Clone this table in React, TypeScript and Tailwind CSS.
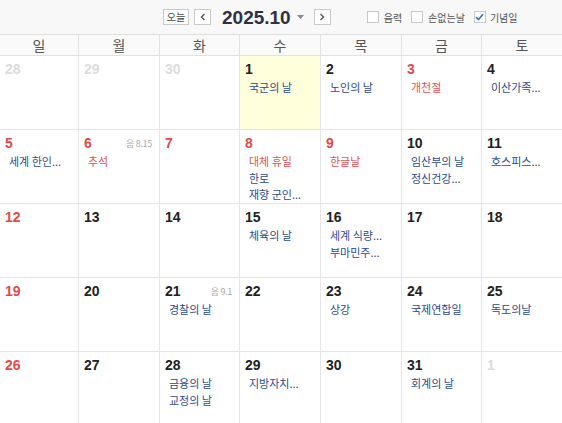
import React from "react";

type Ev = { t: string; red?: boolean };
type Day = { n: number; grey?: boolean; red?: boolean; today?: boolean; lunar?: string; ev?: Ev[] };

const weeks: Day[][] = [
  [
    { n: 28, grey: true },
    { n: 29, grey: true },
    { n: 30, grey: true },
    { n: 1, today: true, ev: [{ t: "국군의 날" }] },
    { n: 2, ev: [{ t: "노인의 날" }] },
    { n: 3, red: true, ev: [{ t: "개천절", red: true }] },
    { n: 4, ev: [{ t: "이산가족..." }] },
  ],
  [
    { n: 5, red: true, ev: [{ t: "세계 한인..." }] },
    { n: 6, red: true, lunar: "음 8.15", ev: [{ t: "추석", red: true }] },
    { n: 7, red: true },
    { n: 8, red: true, ev: [{ t: "대체 휴일", red: true }, { t: "한로" }, { t: "재향 군인..." }] },
    { n: 9, red: true, ev: [{ t: "한글날", red: true }] },
    { n: 10, ev: [{ t: "임산부의 날" }, { t: "정신건강..." }] },
    { n: 11, ev: [{ t: "호스피스..." }] },
  ],
  [
    { n: 12, red: true },
    { n: 13 },
    { n: 14 },
    { n: 15, ev: [{ t: "체육의 날" }] },
    { n: 16, ev: [{ t: "세계 식량..." }, { t: "부마민주..." }] },
    { n: 17 },
    { n: 18 },
  ],
  [
    { n: 19, red: true },
    { n: 20 },
    { n: 21, lunar: "음 9.1", ev: [{ t: "경찰의 날" }] },
    { n: 22 },
    { n: 23, ev: [{ t: "상강" }] },
    { n: 24, ev: [{ t: "국제연합일" }] },
    { n: 25, ev: [{ t: "독도의날" }] },
  ],
  [
    { n: 26, red: true },
    { n: 27 },
    { n: 28, ev: [{ t: "금융의 날" }, { t: "교정의 날" }] },
    { n: 29, ev: [{ t: "지방자치..." }] },
    { n: 30 },
    { n: 31, ev: [{ t: "회계의 날" }] },
    { n: 1, grey: true },
  ],
];

const dayNames = ["일", "월", "화", "수", "목", "금", "토"];
const KR = "font-['Noto_Sans_CJK_KR','Noto_Sans',sans-serif]";
const NUM = "font-['Liberation_Sans',Arial,sans-serif]";
const gridCols = "grid grid-cols-[79px_81px_80px_81px_81px_80px_1fr]";

function Check({ checked }: { checked?: boolean }) {
  return (
    <span className="flex h-[12px] w-[12px] items-center justify-center border border-[#c8c8c8] bg-white">
      {checked && (
        <svg width="9" height="8" viewBox="0 0 9 8">
          <path d="M1 4.2 L3.4 6.5 L8 1.2" fill="none" stroke="#3a6fc4" strokeWidth="1.6" />
        </svg>
      )}
    </span>
  );
}

export default function App() {
  return (
    <div className={`w-[562px] h-[423px] overflow-hidden bg-white ${KR}`}>
      {/* toolbar */}
      <div className="flex h-[35px] items-center border-b border-[#dedede] bg-[#f8f8f8] pl-[163px]">
        <button className="flex h-[16px] w-[26px] items-center justify-center border border-[#c9c9c9] bg-white text-[10px] leading-none text-[#444]">
          오늘
        </button>
        <button className="ml-[5px] flex h-[16px] w-[17px] items-center justify-center border border-[#c9c9c9] bg-white">
          <svg width="6" height="8" viewBox="0 0 6 8">
            <path d="M4.5 1 L1.5 4 L4.5 7" fill="none" stroke="#555" strokeWidth="1.4" />
          </svg>
        </button>
        <span className={`ml-[11px] text-[19px] font-bold leading-none text-[#2f3040] ${NUM}`}>2025.10</span>
        <svg className="ml-[6px]" width="7" height="4" viewBox="0 0 7 4">
          <path d="M0 0 L7 0 L3.5 4 Z" fill="#888" />
        </svg>
        <button className="ml-[10px] flex h-[16px] w-[17px] items-center justify-center border border-[#c9c9c9] bg-white">
          <svg width="6" height="8" viewBox="0 0 6 8">
            <path d="M1.5 1 L4.5 4 L1.5 7" fill="none" stroke="#555" strokeWidth="1.4" />
          </svg>
        </button>
        <div className="ml-[36px] flex items-center text-[10px] text-[#555]">
          <Check />
          <span className="ml-[5px]">음력</span>
          <span className="ml-[9px]"><Check /></span>
          <span className="ml-[5px]">손없는날</span>
          <span className="ml-[9px]"><Check checked /></span>
          <span className="ml-[4px]">기념일</span>
        </div>
      </div>
      {/* day header */}
      <div className={`${gridCols} h-[21px] border-b border-[#e2e2e2] bg-[#fafafa]`}>
        {dayNames.map((d, i) => (
          <div
            key={d}
            className={`flex items-center justify-center text-[14px] leading-none text-[#555] ${i < 6 ? "border-r border-[#e2e2e2]" : ""}`}
          >
            {d}
          </div>
        ))}
      </div>
      {/* weeks */}
      {weeks.map((w, wi) => (
        <div key={wi} className={`${gridCols} h-[74px] border-b border-[#e6e6e6]`}>
          {w.map((d, i) => (
            <div
              key={i}
              className={`pl-[5px] pr-[7px] pt-[5px] ${i < 6 ? "border-r border-[#e6e6e6]" : ""} ${d.today ? "bg-[#ffffdc]" : ""}`}
            >
              <div className="flex h-[16px] items-center justify-between">
                <span
                  className={`text-[14px] font-bold leading-[16px] ${NUM} ${
                    d.grey ? "text-[#dcdcdc]" : d.red ? "text-[#e14a4a]" : "text-[#222]"
                  }`}
                >
                  {d.n}
                </span>
                {d.lunar && (
                  <span className="text-[9px] leading-none tracking-[-0.3px] text-[#a8a8a8]">{d.lunar}</span>
                )}
              </div>
              <div className="mt-[2px] pl-[4px]">
                {d.ev?.map((e, k) => (
                  <div
                    key={k}
                    className={`whitespace-nowrap text-[11px] leading-[16.5px] ${e.red ? "text-[#e35252]" : "text-[#2c4a8e]"}`}
                  >
                    {e.t}
                  </div>
                ))}
              </div>
            </div>
          ))}
        </div>
      ))}
    </div>
  );
}
